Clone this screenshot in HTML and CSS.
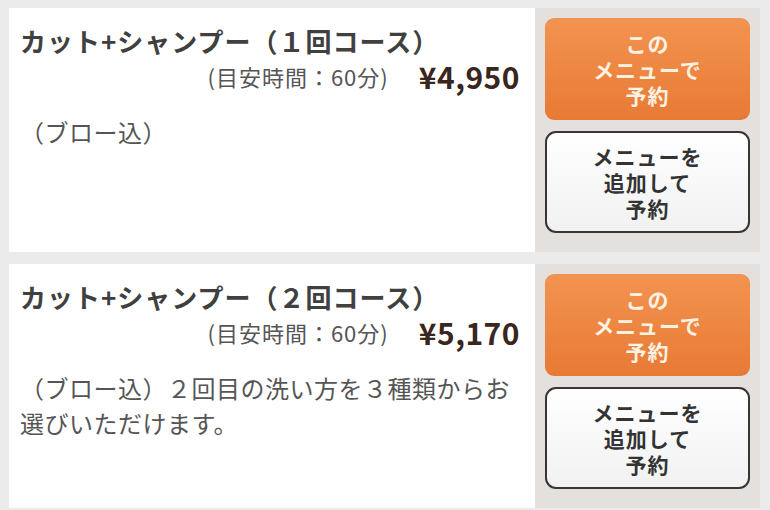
FILE: index.html
```html
<!DOCTYPE html>
<html lang="ja">
<head>
    <meta charset="UTF-8">
    <meta name="viewport" content="width=device-width, initial-scale=1.0">
    <title>メニュー</title>
    <link rel="stylesheet" href="styles.css">
</head>
<body>
    <div class="menu-list">
        <div class="menu-item">
            <div class="menu-item__body">
                <h3 class="menu-item__title">カット+シャンプー（１回コース）</h3>
                <p class="menu-item__meta">
                    <span class="menu-item__time">(目安時間：60分)</span>
                    <span class="menu-item__price">¥4,950</span>
                </p>
                <p class="menu-item__desc">（ブロー込）</p>
            </div>
            <div class="menu-item__side">
                <button class="btn btn--reserve">この<br>メニューで<br>予約</button>
                <button class="btn btn--add">メニューを<br>追加して<br>予約</button>
            </div>
        </div>

        <div class="menu-item">
            <div class="menu-item__body">
                <h3 class="menu-item__title">カット+シャンプー（２回コース）</h3>
                <p class="menu-item__meta">
                    <span class="menu-item__time">(目安時間：60分)</span>
                    <span class="menu-item__price">¥5,170</span>
                </p>
                <p class="menu-item__desc">（ブロー込）２回目の洗い方を３種類からお選びいただけます。</p>
            </div>
            <div class="menu-item__side">
                <button class="btn btn--reserve">この<br>メニューで<br>予約</button>
                <button class="btn btn--add">メニューを<br>追加して<br>予約</button>
            </div>
        </div>
    </div>
</body>
</html>
```

FILE: styles.css
```css
* {
    box-sizing: border-box;
    margin: 0;
    padding: 0;
}

body {
    font-family: "Noto Sans CJK JP", "Noto Sans", sans-serif;
    background: #ebebeb;
    color: #444;
}

/* LIST
=============== */
.menu-list {
    display: flex;
    flex-direction: column;
    gap: 12px;
    width: 751px;
    margin-left: 9px;
    padding-top: 8px;
}

.menu-item {
    display: flex;
    height: 244px;
    background: #fff;
}

/* BODY */
.menu-item__body {
    flex: 1;
    padding: 15px 11px 0 11px;
}

.menu-item__title {
    font-size: 26px;
    font-weight: 700;
    line-height: 36px;
    letter-spacing: 1px;
    color: #404040;
}

.menu-item__meta {
    display: flex;
    justify-content: flex-end;
    align-items: center;
    height: 34px;
    padding-right: 4px;
}

.menu-item__time {
    font-size: 22px;
    letter-spacing: 1px;
    color: #555;
}

.menu-item__price {
    margin-left: 30px;
    font-size: 30px;
    font-weight: 700;
    letter-spacing: 0.5px;
    color: #3a2620;
}

.menu-item__desc {
    margin-top: 21px;
    font-size: 24px;
    line-height: 35px;
    letter-spacing: 0.5px;
    color: #555;
}

/* SIDE BUTTONS */
.menu-item__side {
    display: flex;
    flex-direction: column;
    gap: 11px;
    width: 225px;
    padding: 10px 10px;
    background: #e3e0dd;
}

.btn {
    width: 205px;
    height: 102px;
    font-family: inherit;
    font-size: 21px;
    font-weight: 700;
    line-height: 26px;
    letter-spacing: 1px;
    text-align: center;
    cursor: pointer;
}

.btn--reserve {
    border: none;
    border-radius: 9px;
    background: linear-gradient(#f29450, #e87a35);
    color: #fdf1e2;
}

.btn--add {
    border: 2px solid #3a3533;
    border-radius: 11px;
    background: linear-gradient(#ffffff, #f1f1f1);
    color: #333;
}
```
